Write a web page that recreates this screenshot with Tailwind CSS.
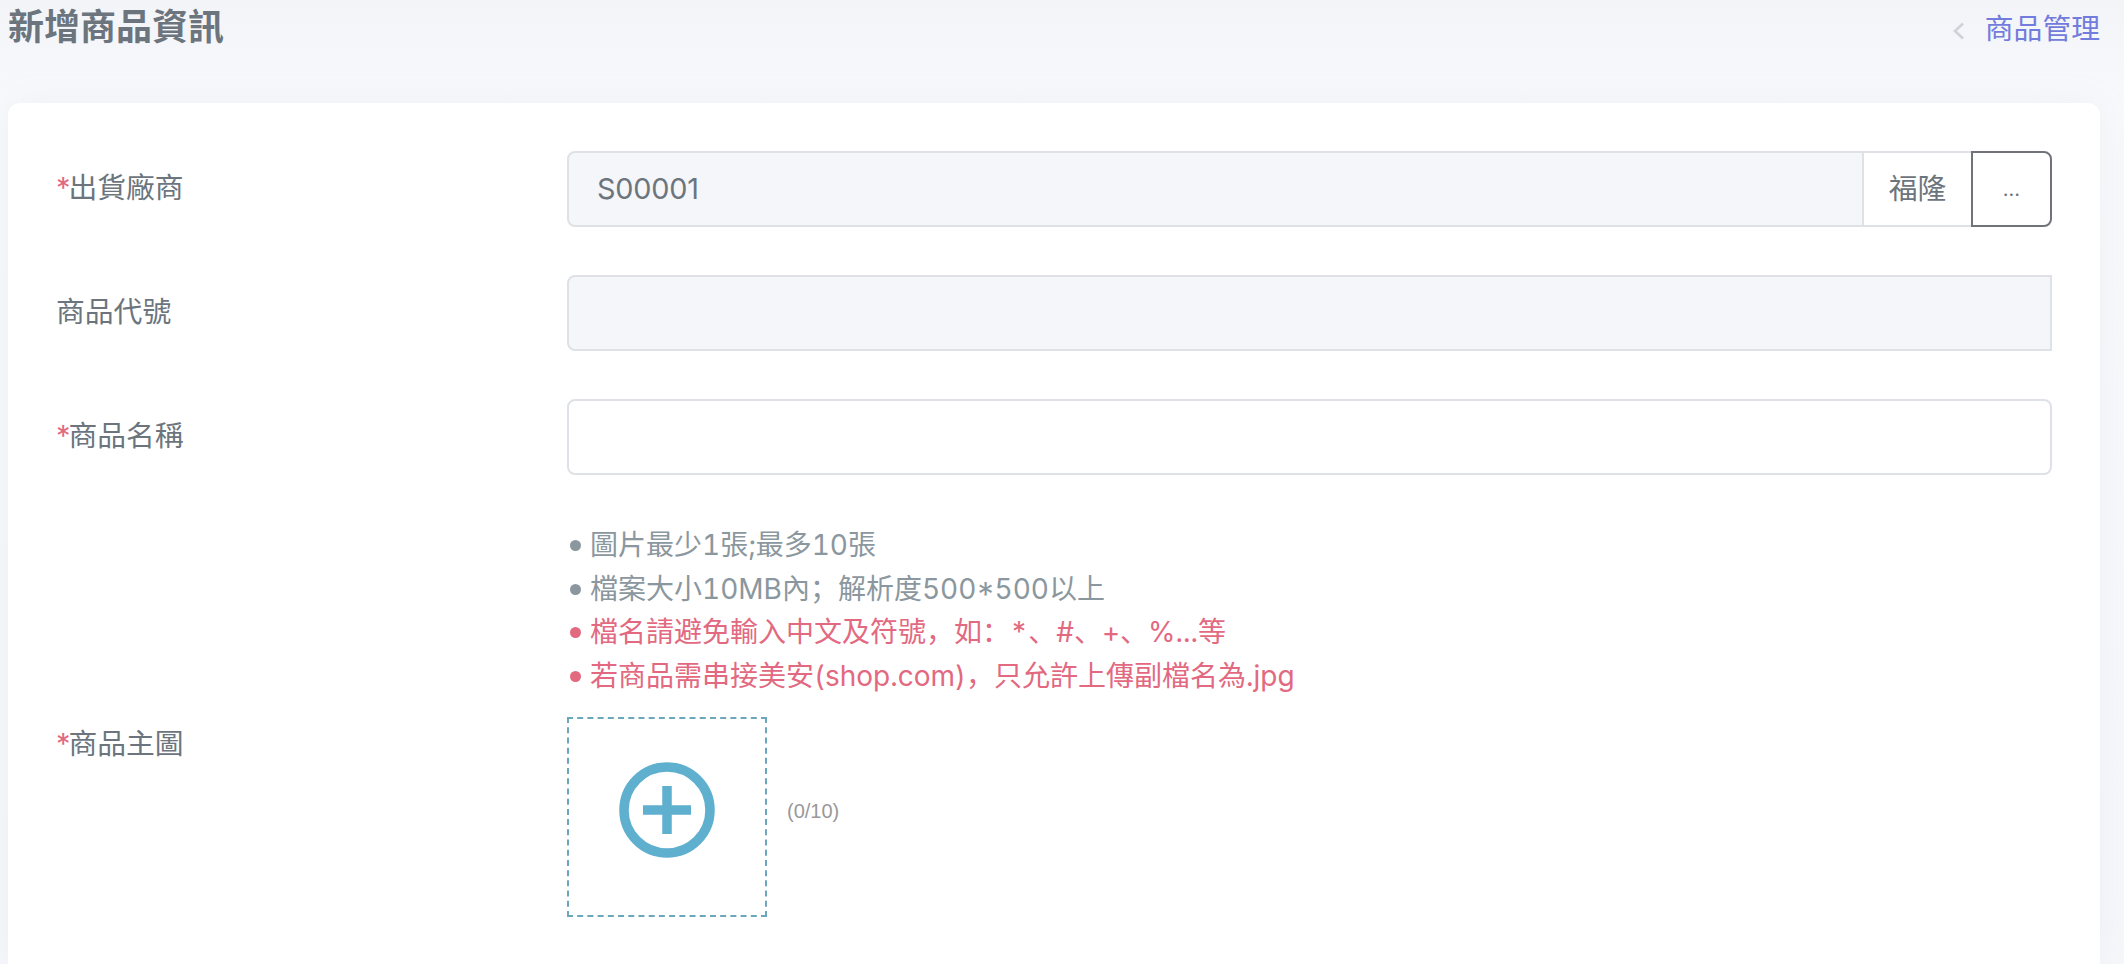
<!DOCTYPE html>
<html>
<head>
  <meta charset="UTF-8" />
  <meta name="viewport" content="width=device-width, initial-scale=1" />
  <title>新增商品資訊</title>
  <script src="https://cdn.jsdelivr.net/npm/@tailwindcss/browser@4"></script>
</head>
<body class="h-[964px] overflow-hidden bg-gradient-to-b from-[#f3f4f8] via-[#f8f9fc] via-[10%] to-[#f5f7fb] font-['Inter','Noto_Sans_CJK_SC',sans-serif] text-[28.8px] text-[#6c757d]">

  <!-- page title -->
  <div class="flex h-[103px] items-start justify-between pl-2 pr-6">
    <h4 class="text-[36px] leading-[54px] font-bold">新增商品資訊</h4>
    <a href="#" class="mt-2 flex items-center leading-[42px] text-[#727cdc]">
      <svg class="mr-[21px] mt-1 h-[18px] w-[11px]" viewBox="0 0 11 18" fill="none" stroke="#ced4da" stroke-width="2.8"><path d="M10 1.5 2 9l8 7.5" /></svg>
      商品管理
    </a>
  </div>

  <!-- form card -->
  <form class="ml-2 mr-6 h-[861px] rounded-t-xl bg-white pl-12 pr-12 pt-12 shadow-[0_0_35px_rgba(154,161,171,0.1)]">

    <div class="mb-12 grid grid-cols-[511px_1fr]">
      <label class="pt-4 leading-[42px]"><span class="mr-[-2px] text-[#e2697f]">*</span>出貨廠商</label>
      <div class="flex h-[76px]">
        <input type="text" value="S00001" readonly class="min-w-0 flex-1 rounded-l-lg border-2 border-[#dee2e6] bg-[#f5f6fa] px-7 tracking-[-0.2px] outline-none" />
        <span class="flex w-[107px] items-center justify-center border-y-2 border-r-0 border-[#dee2e6] bg-white">福隆</span>
        <button type="button" class="w-[81px] rounded-r-lg border-2 border-[#707479] bg-white text-[20px]">...</button>
      </div>
    </div>

    <div class="mb-12 grid grid-cols-[511px_1fr]">
      <label class="pt-4 leading-[42px]">商品代號</label>
      <input type="text" readonly class="h-[76px] rounded-l-lg border-2 border-[#dee2e6] bg-[#f5f6fa] px-7 outline-none" />
    </div>

    <div class="mb-12 grid grid-cols-[511px_1fr]">
      <label class="pt-4 leading-[42px]"><span class="mr-[-2px] text-[#e2697f]">*</span>商品名稱</label>
      <input type="text" class="h-[76px] rounded-lg border-2 border-[#dee2e6] bg-white px-7 outline-none" />
    </div>

    <!-- image rules -->
    <div class="mb-[19px] grid grid-cols-[511px_1fr]">
      <div></div>
      <ul class="pt-px text-[28px] leading-[43.5px] text-[#8b979e] tabular-nums">
        <li class="flex items-center gap-[9px]"><span class="ml-[3px] size-[11px] rounded-full bg-current"></span>圖片最少1張;最多10張</li>
        <li class="flex items-center gap-[9px]"><span class="ml-[3px] size-[11px] rounded-full bg-current"></span>檔案大小10MB內；解析度500*500以上</li>
        <li class="flex items-center gap-[9px] text-[#e2697f]"><span class="ml-[3px] size-[11px] rounded-full bg-current"></span>檔名請避免輸入中文及符號，如：*、#、+、%...等</li>
        <li class="flex items-center gap-[9px] text-[#e2697f]"><span class="ml-[3px] size-[11px] rounded-full bg-current"></span>若商品需串接美安(shop.com)，只允許上傳副檔名為.jpg</li>
      </ul>
    </div>

    <div class="grid grid-cols-[511px_1fr]">
      <label class="pt-[6px] leading-[42px]"><span class="mr-[-2px] text-[#e2697f]">*</span>商品主圖</label>
      <div class="flex items-center gap-5">
        <button type="button" class="flex size-[200px] items-center justify-center border-2 border-dashed border-[#6ba7bc] bg-white pb-[14px]">
          <svg class="size-[96px]" viewBox="0 0 96 96" fill="none" stroke="#5fafcf" stroke-width="9.5">
            <circle cx="48" cy="48" r="43" />
            <path d="M24 48h48M48 24v48" />
          </svg>
        </button>
        <span class="mb-3 font-['Liberation_Sans',sans-serif] text-[20px] text-[#999999]">(0/10)</span>
      </div>
    </div>
  </form>
</body>
</html>
